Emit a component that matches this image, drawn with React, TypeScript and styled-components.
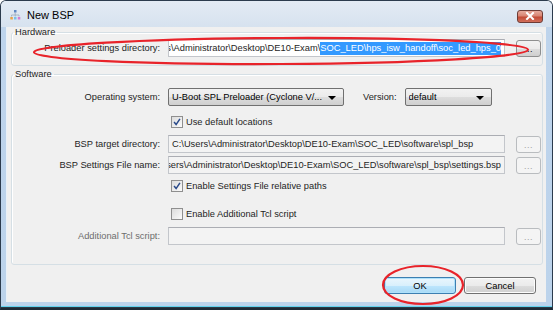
import React from "react";
import styled, { createGlobalStyle } from "styled-components";

const Global = createGlobalStyle`
  html, body { margin: 0; padding: 0; background: #fff; }
  body { font-family: "Liberation Sans", Arial, sans-serif; font-size: 9.3px; color: #1e1e1e; }
`;

const Window = styled.div`
  position: relative;
  width: 553px;
  height: 310px;
  box-sizing: border-box;
  border: 1px solid #2c3b4d;
  border-bottom: 2px solid #1d2a36;
  border-radius: 6px 6px 0 0;
  background: linear-gradient(#dfe8f3 0px, #d3e1f0 25px, #bed4ec 26px, #bcd3eb 100%);
  display: flex;
  flex-direction: column;
  overflow: hidden;
`;

const TitleBar = styled.div`
  height: 26px;
  display: flex;
  align-items: center;
  padding: 1px 9px 0 8px;
  box-sizing: border-box;
  background: linear-gradient(#e3ebf4, #d6e2ef);
`;

const Title = styled.span`
  flex: 1;
  margin-left: 6px;
  font-size: 11px;
  color: #000;
`;

const CloseBtn = styled.div`
  width: 26px;
  height: 13px;
  margin-top: 3px;
  box-sizing: border-box;
  border: 1px solid #6d3b35;
  border-radius: 3px;
  background: linear-gradient(#e6aa9c 0%, #d88573 45%, #c24a35 55%, #d1705c 100%);
  display: flex;
  align-items: center;
  justify-content: center;
`;

const Client = styled.div`
  flex: 1;
  margin: 0 6px 0 5px;
  border-left: 1px solid #eaf1f8;
  background: #f0f0f0;
  display: flex;
  flex-direction: column;
`;

const BottomEdge = styled.div`
  height: 6px;
  background: linear-gradient(#bcd3eb 0, #bcd3eb 4px, #62d2ee 4px, #62d2ee 5px, #2a3a46 5px);
`;

const Group = styled.fieldset<{ $h: number; $mt: number }>`
  margin: ${(p) => p.$mt}px 3px 0 4px;
  height: ${(p) => p.$h}px;
  padding: 0;
  border: 1px solid #d5dfe5;
  border-radius: 3px;
  box-shadow: inset 1px 1px 0 #fff;
  min-width: 0;
`;

const Legend = styled.legend`
  padding: 0 2px;
  margin-left: 1px;
  color: #1e1e1e;
`;

const Row = styled.div<{ $mt?: number }>`
  display: grid;
  grid-template-columns: 148px 337px 25px;
  column-gap: 8px;
  align-items: center;
  height: 18px;
  margin-top: ${(p) => p.$mt ?? 0}px;
  & > :nth-child(3) { margin-left: 3px; }
`;

const Label = styled.span<{ $disabled?: boolean }>`
  text-align: right;
  white-space: nowrap;
  color: ${(p) => (p.$disabled ? "#6d6d6d" : "#1e1e1e")};
`;

const Input = styled.div<{ $white?: boolean; $start?: boolean }>`
  height: 18px;
  box-sizing: border-box;
  border: 1px solid #c3c6cb;
  border-top-color: #abadb3;
  background: ${(p) => (p.$white ? "#fff" : "#f3f3f3")};
  display: flex;
  justify-content: ${(p) => (p.$start ? "flex-start" : "flex-end")};
  align-items: center;
  overflow: hidden;
  white-space: nowrap;
  padding: 0 3px 0 3px;
  color: #1e1e1e;
`;

const Sel = styled.span`
  background: #3399ff;
  color: #fff;
  line-height: 13px;
`;

const Browse = styled.div<{ $enabled?: boolean }>`
  width: 25px;
  height: 17px;
  box-sizing: border-box;
  border: 1px solid ${(p) => (p.$enabled ? "#8e8f8f" : "#b9bcbf")};
  border-radius: 3px;
  background: ${(p) =>
    p.$enabled ? "linear-gradient(#f2f2f2, #ebebeb 50%, #dddddd 51%, #cfcfcf)" : "#f4f4f4"};
  color: ${(p) => (p.$enabled ? "#000" : "#a0a0a0")};
  display: flex;
  align-items: center;
  justify-content: center;
  font-size: 9px;
  letter-spacing: 0.5px;
  padding-top: 1px;
`;

const Controls = styled.div`
  display: flex;
  align-items: center;
  grid-column: 2 / 4;
`;

const Combo = styled.div<{ $w: number }>`
  width: ${(p) => p.$w}px;
  height: 18px;
  box-sizing: border-box;
  border: 1px solid #707070;
  border-radius: 2px;
  background: linear-gradient(#f2f2f2, #ebebeb 50%, #dddddd 51%, #cfcfcf);
  display: flex;
  align-items: center;
  padding: 0 7px 0 3px;
  color: #000;
  white-space: nowrap;
`;

const ComboText = styled.span`
  flex: 1;
  overflow: hidden;
`;

const Arrow = styled.span`
  width: 0;
  height: 0;
  border-left: 4px solid transparent;
  border-right: 4px solid transparent;
  border-top: 4px solid #000;
  margin-top: 2px;
`;

const VersionLabel = styled.span`
  margin: 0 8px 0 19px;
`;

const CheckRow = styled.label<{ $mt: number }>`
  display: flex;
  align-items: center;
  margin: ${(p) => p.$mt}px 0 0 159px;
  height: 14px;
  gap: 3px;
  color: #1e1e1e;
`;

const Box = styled.span`
  width: 12px;
  height: 12px;
  box-sizing: border-box;
  border: 1px solid #8f8f8f;
  background: linear-gradient(135deg, #dcdcdc, #fbfbfb);
  display: flex;
  align-items: center;
  justify-content: center;
`;

const Footer = styled.div`
  display: flex;
  justify-content: flex-end;
  gap: 8px;
  padding: 12px 10px 0 0;
`;

const Button = styled.div<{ $focus?: boolean }>`
  width: 72px;
  height: 17px;
  box-sizing: border-box;
  border: 1px solid ${(p) => (p.$focus ? "#3c7fb1" : "#707070")};
  border-radius: 3px;
  background: ${(p) =>
    p.$focus
      ? "linear-gradient(#eaf6fd, #d9f0fc 50%, #bee6fd 51%, #a7d9f5)"
      : "linear-gradient(#f2f2f2, #ebebeb 50%, #dddddd 51%, #cfcfcf)"};
  box-shadow: inset 0 0 0 1px ${(p) => (p.$focus ? "#aee1fb" : "#fcfcfc")};
  display: flex;
  align-items: center;
  justify-content: center;
  color: #000;
`;

const Marks = styled.svg`
  position: absolute;
  left: 0;
  top: 0;
  pointer-events: none;
`;

const Check = () => (
  <svg width="8" height="8" viewBox="0 0 9 9">
    <path d="M1.2 4.6 L3.5 7.4 L7.8 1" fill="none" stroke="#2a4a8a" strokeWidth="1.7" />
  </svg>
);

const AppIcon = () => (
  <svg width="12" height="12" viewBox="0 0 12 12">
    <rect x="5" y="1" width="2.5" height="2.5" fill="#5e87c4" />
    <path d="M6.2 3.5 V6 M2.5 6 H10 M2.5 6 V7.5 M6.2 6 V7.5 M10 6 V7.5" stroke="#9aa9bb" strokeWidth="0.8" fill="none" />
    <rect x="1.3" y="8" width="2.5" height="2.5" fill="#e6a54a" />
    <rect x="5" y="8" width="2.5" height="2.5" fill="#7ac0e8" />
    <rect x="8.8" y="8" width="2.5" height="2.5" fill="#d47ed0" />
  </svg>
);

export default function App() {
  return (
    <>
      <Global />
      <Window>
        <TitleBar>
          <AppIcon />
          <Title>New BSP</Title>
          <CloseBtn>
            <svg width="10" height="8" viewBox="0 0 10 8">
              <path d="M2 1 L8 7 M8 1 L2 7" stroke="#fff" strokeWidth="2" strokeLinecap="square" />
            </svg>
          </CloseBtn>
        </TitleBar>
        <Client>
          <Group $mt={0} $h={37}>
            <Legend>Hardware</Legend>
            <Row $mt={2}>
              <Label>Preloader settings directory:</Label>
              <Input $white>
                C:\Users\Administrator\Desktop\DE10-Exam\
                <Sel>SOC_LED\hps_isw_handoff\soc_led_hps_0</Sel>
              </Input>
              <Browse $enabled>...</Browse>
            </Row>
          </Group>
          <Group $mt={3} $h={194}>
            <Legend>Software</Legend>
            <Row $mt={9}>
              <Label>Operating system:</Label>
              <Controls>
                <Combo $w={176}>
                  <ComboText>U-Boot SPL Preloader (Cyclone V/...</ComboText>
                  <Arrow />
                </Combo>
                <VersionLabel>Version:</VersionLabel>
                <Combo $w={87}>
                  <ComboText>default</ComboText>
                  <Arrow />
                </Combo>
              </Controls>
            </Row>
            <CheckRow $mt={9}>
              <Box>
                <Check />
              </Box>
              Use default locations
            </CheckRow>
            <Row $mt={6}>
              <Label>BSP target directory:</Label>
              <Input $start>C:\Users\Administrator\Desktop\DE10-Exam\SOC_LED\software\spl_bsp</Input>
              <Browse>...</Browse>
            </Row>
            <Row $mt={3}>
              <Label>BSP Settings File name:</Label>
              <Input>C:\Users\Administrator\Desktop\DE10-Exam\SOC_LED\software\spl_bsp\settings.bsp</Input>
              <Browse>...</Browse>
            </Row>
            <CheckRow $mt={5}>
              <Box>
                <Check />
              </Box>
              Enable Settings File relative paths
            </CheckRow>
            <CheckRow $mt={14}>
              <Box />
              Enable Additional Tcl script
            </CheckRow>
            <Row $mt={6}>
              <Label $disabled>Additional Tcl script:</Label>
              <Input />
              <Browse>...</Browse>
            </Row>
          </Group>
          <Footer>
            <Button $focus>OK</Button>
            <Button>Cancel</Button>
          </Footer>
        </Client>
        <BottomEdge />
        <Marks width="553" height="310">
          <ellipse cx="280" cy="50" rx="247" ry="13" fill="none" stroke="#e8232a" strokeWidth="2.2" transform="rotate(-0.3 280 50)" />
          <ellipse cx="422" cy="284" rx="40" ry="19" fill="none" stroke="#e8232a" strokeWidth="2.2" />
        </Marks>
      </Window>
    </>
  );
}
